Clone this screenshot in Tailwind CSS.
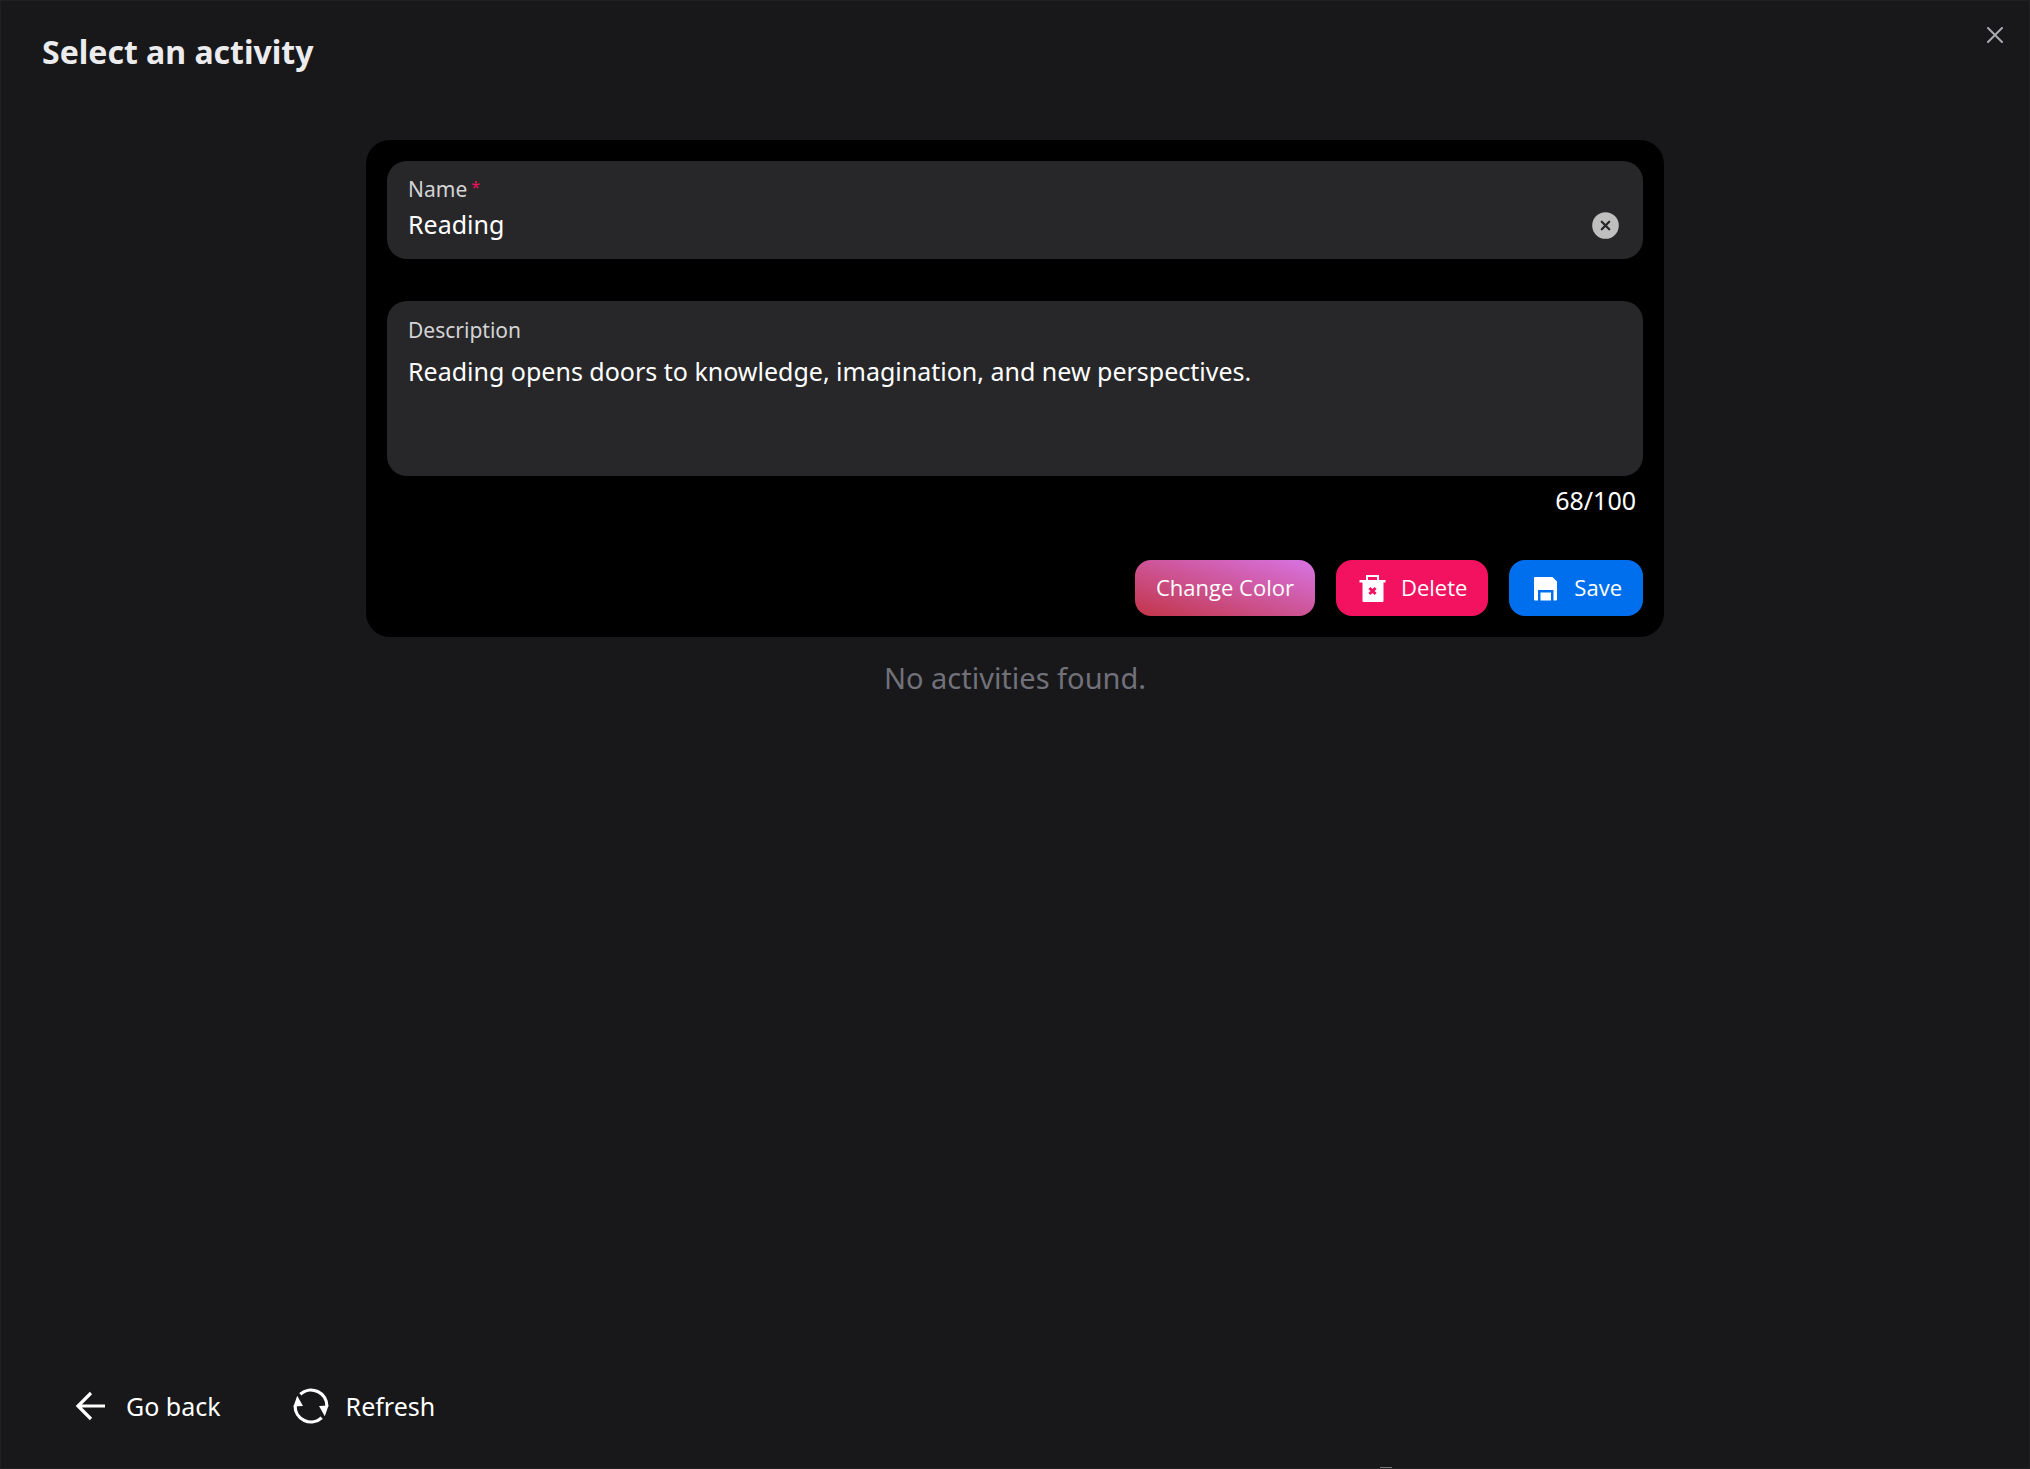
<!DOCTYPE html>
<html lang="en">
<head>
<meta charset="utf-8">
<meta name="viewport" content="width=device-width, initial-scale=1">
<title>Select an activity</title>
<script src="https://cdn.jsdelivr.net/npm/@tailwindcss/browser@4"></script>
</head>
<body class="bg-[#18181a] text-white font-['Noto_Sans','Open_Sans',sans-serif]">
<div role="dialog" aria-labelledby="dialog-title" class="relative flex min-h-screen flex-col overflow-hidden border border-[#202022]">
  <header class="flex items-start justify-between pl-[41px] pr-[21px]">
    <h1 id="dialog-title" class="pt-[30px] text-[32px] leading-[42px] font-bold text-[#ececee]">Select an activity</h1>
    <button type="button" aria-label="Close" class="mt-[21px] p-[5px]">
      <svg class="size-4" viewBox="0 0 16 16" fill="none" stroke="#a9a9b1" stroke-width="2" stroke-linecap="round"><path d="M1 1l14 14M15 1L1 15"/></svg>
    </button>
  </header>

  <main class="flex grow flex-col items-center px-10 pt-[67px]">
    <form class="w-full max-w-[1298px] rounded-3xl bg-black p-[21px]">
      <div class="flex h-[98px] items-end justify-between rounded-[20px] bg-[#27272a] px-[21px] py-3">
        <div class="flex h-full grow flex-col">
          <label for="name" class="text-[21px] leading-8 text-[#d3d3d5]">Name<span class="ml-1 align-top text-base leading-7 text-[#f31260]">*</span></label>
          <input id="name" type="text" required value="Reading" class="w-full bg-transparent text-[25px] leading-[38px] outline-none">
        </div>
        <button type="button" aria-label="Clear name" class="mr-[3px] mb-2">
          <svg class="size-[27px]" viewBox="0 0 27 27"><circle cx="13.500" cy="13.500" r="13.300" fill="#bfbfc0"/><path d="M9.800 9.800l7.400 7.400M17.200 9.800l-7.400 7.400" stroke="#27272a" stroke-width="2.300" stroke-linecap="round"/></svg>
        </button>
      </div>

      <div class="mt-[42px] flex h-[175px] flex-col rounded-[20px] bg-[#27272a] px-[21px] py-[13px]">
        <label for="description" class="text-[21px] leading-8 text-[#d3d3d5]">Description</label>
        <textarea id="description" maxlength="100" class="mt-[7px] grow resize-none bg-transparent text-[25px] leading-9 outline-none">Reading opens doors to knowledge, imagination, and new perspectives.</textarea>
      </div>
      <p class="mt-[5px] pr-[7px] text-right text-[25px] leading-[38px]">68/100</p>

      <div class="mt-[41px] flex justify-end gap-[21px] font-['Open_Sans','Noto_Sans',sans-serif] text-[22px]">
        <button type="button" class="h-14 rounded-2xl bg-[linear-gradient(to_top_right,#c23548,#d874e4)] px-[21px] pb-px">Change Color</button>
        <button type="button" class="flex h-14 items-center gap-3 rounded-2xl bg-[#f31260] px-[21px] pb-px">
          <svg class="size-8" viewBox="0 0 32 32" fill="#fff"><path fill-rule="evenodd" d="M9 3h13v5h6.500v2.500h-2V29a1 1 0 0 1-1 1h-19a1 1 0 0 1-1-1V10.500h-3V8H9zm2 2v3h9V5z"/><path d="M12.400 16l6.200 6M18.600 16l-6.200 6" stroke="#f31260" stroke-width="3"/></svg>
          Delete
        </button>
        <button type="button" class="flex h-14 items-center gap-3 rounded-2xl bg-[#006fee] px-[21px] pb-px">
          <svg class="size-8" viewBox="0 0 32 32" fill="#fff"><path d="M5 5h17.500l4.500 4.500V27.500a1 1 0 0 1-1 1h-2.500V18H8v10.500H5a1 1 0 0 1-1-1V6a1 1 0 0 1 1-1zM10.500 20.500h10.500v8H10.500z"/></svg>
          Save
        </button>
      </div>
    </form>
    <p class="mt-[21px] text-[29px] leading-10 text-[#71717a]">No activities found.</p>
  </main>

  <footer class="flex gap-[54px] px-[62px] pb-[41px] text-[25px] leading-[42px]">
    <button type="button" class="flex items-center gap-[15px] px-2">
      <svg class="size-10" viewBox="0 0 40 40" fill="none" stroke="#fff" stroke-width="3.200"><path d="M34 20H8M20 7L7 20l13 13"/></svg>
      Go back
    </button>
    <button type="button" class="flex items-center gap-[15px] px-2">
      <svg class="size-10" viewBox="0 0 40 40" fill="none" stroke="#fff" stroke-width="3.200"><path d="M9.300 8.200A15.900 15.900 0 0 1 35.900 20.500M30.700 31.800A15.900 15.900 0 0 1 4.100 19.500"/><path d="M6.200 9.800L2.500 20.500l9.500-.500zM33.800 30.200L37.500 19.500l-9.500.500z" fill="#fff" stroke="none"/></svg>
      Refresh
    </button>
  </footer>
  <div class="absolute bottom-0 left-[68%] h-px w-3 bg-[#77777a]"></div>
</div>
</body>
</html>
